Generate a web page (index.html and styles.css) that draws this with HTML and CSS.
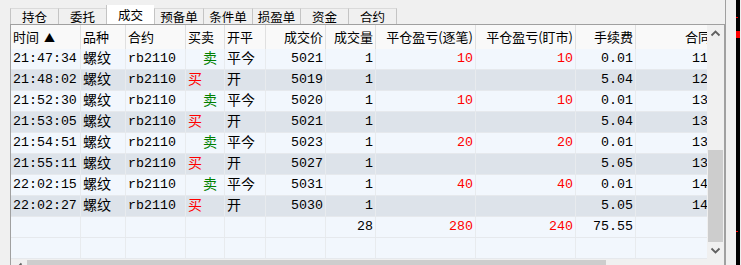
FILE: index.html
```html
<!DOCTYPE html>
<html lang="zh-CN">
<head>
<meta charset="utf-8">
<title>成交</title>
<link rel="stylesheet" href="styles.css">
</head>
<body>
<div class="window">
  <div class="main">
    <div class="tabs">
      <div class="tab">持仓</div>
      <div class="tab">委托</div>
      <div class="tab active">成交</div>
      <div class="tab">预备单</div>
      <div class="tab">条件单</div>
      <div class="tab">损盈单</div>
      <div class="tab">资金</div>
      <div class="tab">合约</div>
    </div>
    <div class="frame">
      <div class="table">
        <div class="row head">
          <div class="c l">时间 <span class="arrow">▲</span></div>
          <div class="c l">品种</div>
          <div class="c l">合约</div>
          <div class="c l">买卖</div>
          <div class="c l">开平</div>
          <div class="c r">成交价</div>
          <div class="c r">成交量</div>
          <div class="c r">平仓盈亏(逐笔)</div>
          <div class="c r">平仓盈亏(盯市)</div>
          <div class="c r">手续费</div>
          <div class="c r last">合同编号</div>
        </div>
        <div class="row odd">
          <div class="c l">21:47:34</div><div class="c l zh">螺纹</div><div class="c l">rb2110</div><div class="c zh sell">卖</div><div class="c l zh">平今</div>
          <div class="c r">5021</div><div class="c r">1</div><div class="c r red">10</div><div class="c r red">10</div><div class="c r">0.01</div><div class="c r">110583</div>
        </div>
        <div class="row even">
          <div class="c l">21:48:02</div><div class="c l zh">螺纹</div><div class="c l">rb2110</div><div class="c zh buy">买</div><div class="c l zh">开</div>
          <div class="c r">5019</div><div class="c r">1</div><div class="c r red"></div><div class="c r red"></div><div class="c r">5.04</div><div class="c r">120419</div>
        </div>
        <div class="row odd">
          <div class="c l">21:52:30</div><div class="c l zh">螺纹</div><div class="c l">rb2110</div><div class="c zh sell">卖</div><div class="c l zh">平今</div>
          <div class="c r">5020</div><div class="c r">1</div><div class="c r red">10</div><div class="c r red">10</div><div class="c r">0.01</div><div class="c r">130225</div>
        </div>
        <div class="row even">
          <div class="c l">21:53:05</div><div class="c l zh">螺纹</div><div class="c l">rb2110</div><div class="c zh buy">买</div><div class="c l zh">开</div>
          <div class="c r">5021</div><div class="c r">1</div><div class="c r red"></div><div class="c r red"></div><div class="c r">5.04</div><div class="c r">130562</div>
        </div>
        <div class="row odd">
          <div class="c l">21:54:51</div><div class="c l zh">螺纹</div><div class="c l">rb2110</div><div class="c zh sell">卖</div><div class="c l zh">平今</div>
          <div class="c r">5023</div><div class="c r">1</div><div class="c r red">20</div><div class="c r red">20</div><div class="c r">0.01</div><div class="c r">131877</div>
        </div>
        <div class="row even">
          <div class="c l">21:55:11</div><div class="c l zh">螺纹</div><div class="c l">rb2110</div><div class="c zh buy">买</div><div class="c l zh">开</div>
          <div class="c r">5027</div><div class="c r">1</div><div class="c r red"></div><div class="c r red"></div><div class="c r">5.05</div><div class="c r">132104</div>
        </div>
        <div class="row odd">
          <div class="c l">22:02:15</div><div class="c l zh">螺纹</div><div class="c l">rb2110</div><div class="c zh sell">卖</div><div class="c l zh">平今</div>
          <div class="c r">5031</div><div class="c r">1</div><div class="c r red">40</div><div class="c r red">40</div><div class="c r">0.01</div><div class="c r">140336</div>
        </div>
        <div class="row even">
          <div class="c l">22:02:27</div><div class="c l zh">螺纹</div><div class="c l">rb2110</div><div class="c zh buy">买</div><div class="c l zh">开</div>
          <div class="c r">5030</div><div class="c r">1</div><div class="c r red"></div><div class="c r red"></div><div class="c r">5.05</div><div class="c r">140571</div>
        </div>
        <div class="row odd">
          <div class="c l"></div><div class="c l"></div><div class="c l"></div><div class="c l"></div><div class="c l"></div>
          <div class="c r"></div><div class="c r">28</div><div class="c r red">280</div><div class="c r red">240</div><div class="c r">75.55</div><div class="c r"></div>
        </div>
        <div class="row odd">
          <div class="c l"></div><div class="c l"></div><div class="c l"></div><div class="c l"></div><div class="c l"></div>
          <div class="c r"></div><div class="c r"></div><div class="c r"></div><div class="c r"></div><div class="c r"></div><div class="c r"></div>
        </div>
      </div>
      <div class="vscroll">
        <div class="vbtn">
          <svg width="11" height="7" viewBox="0 0 11 7"><polyline points="1.5,5.5 5.5,1.5 9.5,5.5" fill="none" stroke="#606060" stroke-width="1.8"/></svg>
        </div>
        <div class="vtrack"><div class="vthumb"></div></div>
        <div class="vbtn">
          <svg width="11" height="7" viewBox="0 0 11 7"><polyline points="1.5,1.5 5.5,5.5 9.5,1.5" fill="none" stroke="#606060" stroke-width="1.8"/></svg>
        </div>
      </div>
      <div class="hscroll">
        <div class="hbtn">
          <svg width="7" height="11" viewBox="0 0 7 11"><polyline points="5.5,1.5 1.5,5.5 5.5,9.5" fill="none" stroke="#606060" stroke-width="1.8"/></svg>
        </div>
        <div class="hthumb"></div>
      </div>
      <div class="corner"></div>
    </div>
  </div>
  <div class="gap"></div>
  <div class="edge">
    <div class="mark m1"></div>
    <div class="mark m2"></div>
    <div class="mark m3"></div>
  </div>
</div>
</body>
</html>
```

FILE: styles.css
```css
html, body {
  margin: 0;
  padding: 0;
}
body {
  width: 741px;
  height: 265px;
  overflow: hidden;
  background: #f0f0f0;
  font-family: "Noto Sans CJK SC", "Liberation Sans", sans-serif;
  color: #000;
}
.window {
  display: flex;
  height: 265px;
}
.main {
  width: 715px;
  padding-left: 10px;
  display: flex;
  flex-direction: column;
}
.tabs {
  height: 24px;
  display: flex;
  align-items: flex-end;
}
.tab {
  height: 16px;
  width: 48px;
  box-sizing: border-box;
  border-top: 1px solid #dadada;
  border-left: 1px solid #c4c4c4;
  background: #f0f0f0;
  font-size: 12.5px;
  line-height: 16px;
  text-align: center;
}
.tab:nth-child(4), .tab:nth-child(5) { width: 49px; }
.tab:nth-child(6) { width: 48px; }
.tab:last-child {
  border-right: 1px solid #c4c4c4;
  width: 49px;
}
.tab.active {
  height: 19px;
  background: #fff;
  border-top: none;
  line-height: 20px;
}
.frame {
  flex: 1;
  border: 1px solid #a0a0a0;
  border-bottom: none;
  display: grid;
  grid-template-columns: 696px 17px;
  grid-template-rows: 234px 17px;
  overflow: hidden;
}
.table {
  overflow: hidden;
  background: #f2f7fd;
}
.row {
  display: grid;
  grid-template-columns: 70px 45px 60px 39px 41px 60px 50px 100px 100px 60px 107px;
  width: 732px;
  height: 20px;
  border-bottom: 1px solid #e6e9ed;
  font-family: "Liberation Mono", "Noto Sans CJK SC", monospace;
  font-size: 13.3px;
}
.row.head {
  height: 24px;
  border-bottom: none;
  background: #f9f9f9;
  font-family: "Noto Sans CJK SC", "Liberation Sans", sans-serif;
  font-size: 13px;
}
.row.odd { background: #f2f7fd; }
.row.even { background: #dde3ea; }
.c {
  border-right: 1px solid #e8ebee;
  line-height: 20px;
  white-space: nowrap;
  overflow: hidden;
  padding: 0 2px;
}
.head .c {
  line-height: 24px;
  border-right: 1px solid #e0e0e0;
}
.c.l { text-align: left; }
.c.r { text-align: right; padding-right: 2px; }
.head .c.last { padding-right: 5px; }
.zh {
  font-family: "Noto Sans CJK SC", sans-serif;
  font-size: 14px;
}
.c.zh {
  line-height: 17px;
  overflow: visible;
}
.buy { color: #ff0000; padding-left: 2px; }
.sell { color: #008000; padding-left: 17px; }
.red { color: #ff0000; }
.arrow { font-size: 11px; margin-left: 2px; }
.vscroll {
  display: flex;
  flex-direction: column;
  background: #f0f0f0;
}
.vbtn {
  height: 17px;
  display: flex;
  align-items: center;
  justify-content: center;
}
.vtrack {
  flex: 1;
  display: flex;
  flex-direction: column;
  justify-content: flex-end;
  padding: 0 1px;
}
.vthumb {
  height: 92px;
  background: #cdcdcd;
}
.hscroll {
  display: flex;
  background: #f0f0f0;
  align-items: stretch;
}
.hbtn {
  width: 16px;
  display: flex;
  align-items: center;
  justify-content: center;
}
.hthumb {
  width: 579px;
  margin-top: 1px;
  background: #cdcdcd;
}
.corner { background: #f0f0f0; }
.gap {
  width: 11px;
  border-left: 1px solid #a0a0a0;
  box-sizing: border-box;
  background: #f0f0f0;
}
.edge {
  width: 4px;
  background: #000;
  display: flex;
  flex-direction: column;
}
.mark { background: #ff0000; }
.m1 { height: 1px; margin-top: 17px; width: 2px; }
.m2 { height: 7px; margin-top: 13px; }
.m3 { height: 1px; margin-top: 193px; width: 2px; }
```
